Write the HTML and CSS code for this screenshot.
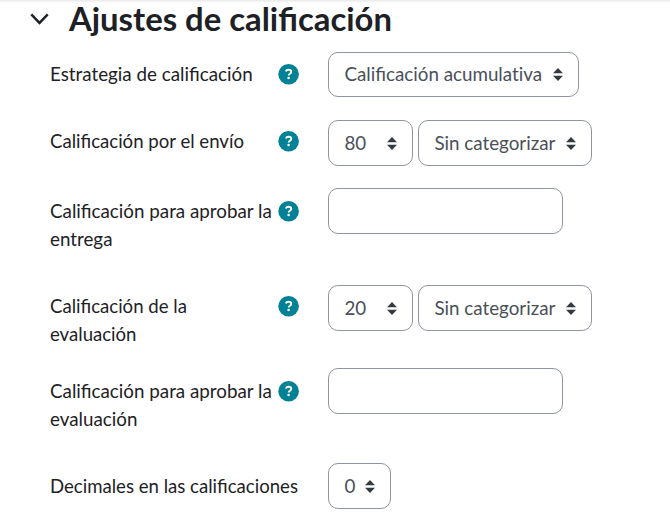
FILE: index.html
```html
<!DOCTYPE html>
<html lang="es">
<head>
<meta charset="utf-8">
<title>Ajustes de calificación</title>
<link rel="stylesheet" href="styles.css">
</head>
<body>
<svg class="defs" aria-hidden="true">
  <symbol id="arrows" viewBox="0 0 10 13"><path d="M0 5.3 5 0l5 5.3zM0 7.7 5 13l5-5.3z"/></symbol>
  <symbol id="help" viewBox="-.3 0 20.6 20.6"><circle cx="10.1" cy="10.1" r="10.1" fill="#008196"/><path d="M7.4 7.4C7.8 6.2 8.7 5.7 10 5.7c1.6 0 2.7.8 2.7 2.1 0 1.7-2.5 1.8-2.5 3.5" fill="none" stroke="#fff" stroke-width="1.9"/><circle cx="10.1" cy="13.7" r="1.25" fill="#fff"/></symbol>
</svg>
<main class="form">
  <header class="heading">
    <svg class="chevron" viewBox="0 0 18 11"><path d="M1.2 1.2 9 9.2l7.8-8"/></svg>
    <h3>Ajustes de calificación</h3>
  </header>
  <div class="row first">
    <label class="name">Estrategia de calificación</label>
    <svg class="help"><use href="#help"/></svg>
    <div class="fields"><div class="select strategy">Calificación acumulat&zwnj;iva<svg><use href="#arrows"/></svg></div></div>
  </div>
  <div class="row submission">
    <label class="name tight">Calificación por el envío</label>
    <svg class="help"><use href="#help"/></svg>
    <div class="fields"><div class="select points">80<svg><use href="#arrows"/></svg></div><div class="select category">Sin categorizar<svg><use href="#arrows"/></svg></div></div>
  </div>
  <div class="row pass">
    <label class="name">Calificación para aprobar la entrega</label>
    <svg class="help"><use href="#help"/></svg>
    <div class="fields"><input class="text" type="text" aria-label="Calificación para aprobar la entrega"></div>
  </div>
  <div class="row assessment">
    <label class="name tight">Calificación de la evaluación</label>
    <svg class="help"><use href="#help"/></svg>
    <div class="fields"><div class="select points">20<svg><use href="#arrows"/></svg></div><div class="select category">Sin categorizar<svg><use href="#arrows"/></svg></div></div>
  </div>
  <div class="row pass-assessment">
    <label class="name">Calificación para aprobar la evaluación</label>
    <svg class="help"><use href="#help"/></svg>
    <div class="fields"><input class="text" type="text" aria-label="Calificación para aprobar la evaluación"></div>
  </div>
  <div class="row decimals">
    <label class="name wide tight">Decimales en las calificaciones</label>
    <div class="fields"><div class="select digits">0<svg><use href="#arrows"/></svg></div></div>
  </div>
</main>
</body>
</html>
```
FILE: styles.css
```css
* { box-sizing: border-box; }
body {
  margin: 0;
  height: 527px;
  overflow: hidden;
  background: linear-gradient(#e9e9ea, #fff 3px) no-repeat #fff;
  color: #1d2125;
  font: 18.8px/28px Lato, "Liberation Sans", sans-serif;
}
.defs { display: none; }
.form { padding-left: 30px; }
.heading { display: flex; align-items: center; height: 38px; margin-bottom: 14px; }
.chevron { width: 19px; height: 12px; fill: none; stroke: #1d2125; stroke-width: 2.3; }
h3 { margin: 0 0 0 20px; font-size: 32.85px; font-weight: 700; line-height: 38px; white-space: nowrap; }
.row {
  display: grid;
  grid-template-columns: 228px 21px 1fr;
  align-items: start;
  padding-left: 20px;
  height: 68px;
}
.name { padding-top: 8px; }
.tight { font-size: 18.6px; }
.wide { grid-column: span 2; white-space: nowrap; }
.help { width: 21px; height: 21px; margin-top: 12px; }
.fields { display: flex; gap: 5px; padding-left: 29px; }
.submission .name { padding-top: 7px; }
.submission .help, .assessment .help { margin-top: 11px; }
.pass { height: 97px; }
.pass .name, .pass-assessment .name, .decimals .name { padding-top: 9px; }
.pass .help, .pass-assessment .help { margin-top: 13px; }
.assessment { height: 83px; }
.assessment .name { padding: 7px 40px 0 0; }
.pass-assessment { height: 95px; }
.select, .text {
  height: 46px;
  border: 1px solid #8f959e;
  border-radius: 10px;
  background: #fff;
  color: #495057;
  font: inherit;
}
.select {
  display: flex;
  align-items: center;
  justify-content: space-between;
  padding: 0 15px 0 15.4px;
  white-space: nowrap;
}
.select svg { flex: none; width: 10px; height: 13px; fill: #343a40; }
.strategy { width: 251px; height: 45px; padding-bottom: 1px; }
.points { width: 85px; }
.category { width: 174px; }
.digits { width: 63px; }
.text { width: 235px; outline: 0; }
```
